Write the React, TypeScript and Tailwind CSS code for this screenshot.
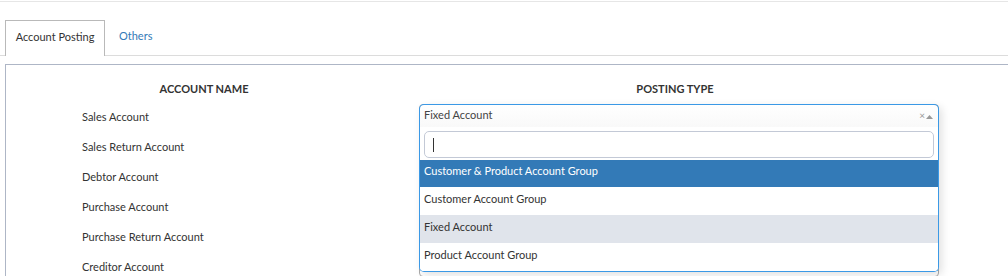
import React from 'react';

// Account rows shown on the left, each with a posting type select on the right
const accounts = [
    'Sales Account',
    'Sales Return Account',
    'Debtor Account',
    'Purchase Account',
    'Purchase Return Account',
    'Creditor Account',
];

const options = [
    'Customer & Product Account Group',
    'Customer Account Group',
    'Fixed Account',
    'Product Account Group',
];

const font = { fontFamily: 'Lato, "Open Sans", sans-serif' };

// Open select2-style dropdown, drawn over the rows below it
const OpenSelect: React.FC = () => (
    <div className="absolute left-0 top-0 z-10 w-[520px] shadow-[3px_3px_8px_rgba(0,0,0,0.12)] rounded-[5px]">
        <div className="flex h-[23px] items-center justify-between border border-b-0 border-[#3b99e6] rounded-t-[5px] bg-gradient-to-b from-white to-[#f9f9f9] pb-[2px] pl-[4px] pr-[5px]">
            <span className="text-[11px] text-[#444]">Fixed Account</span>
            <span className="flex items-center gap-[1px] text-[#999]">
                <span className="text-[10px] leading-none">×</span>
                <svg width="7" height="5" viewBox="0 0 7 5" className="mt-[2px]"><path d="M0 5 L3.5 1 L7 5 Z" fill="#999" /></svg>
            </span>
        </div>
        <div className="border border-t-0 border-[#3b99e6] rounded-b-[5px] bg-white overflow-hidden">
            <div className="px-[4px] pt-[4px] pb-[2px]">
                <div className="flex h-[27px] items-center border border-[#c3c9d6] rounded-[5px] pl-[8px]">
                    <span className="h-[14px] w-px bg-[#333]" />
                </div>
            </div>
            {options.map((o, i) => (
                <div
                    key={o}
                    className={
                        'flex items-center pl-[4px] pb-[4px] text-[11px] ' +
                        (i === 0 ? 'h-[27px] bg-[#337ab7] text-white' : i === 2 ? 'h-[28px] bg-[#e0e4eb] text-[#333]' : 'h-[28px] bg-white text-[#333]')
                    }
                >
                    {o}
                </div>
            ))}
        </div>
    </div>
);

const App: React.FC = () => {
    return (
        <div className="w-[1008px] h-[276px] overflow-hidden bg-white" style={font}>
            <div className="mt-px border-t border-[#e6e6e6]" />

            {/* Tabs */}
            <div className="mt-[18px] flex border-b border-[#dcdcdc] pl-[5px]">
                <div className="-mb-px flex h-[36px] w-[100px] items-center justify-center border border-b-0 border-[#b9b9b9] bg-white pb-[3px] text-[11px] text-[#333]">
                    Account Posting
                </div>
                <div className="flex h-[35px] items-center px-[14px] pb-[3px] text-[11px] text-[#337ab7]">Others</div>
            </div>

            {/* Panel */}
            <div className="ml-[5px] mt-[8px] border-l border-t border-[#aeb6c6]">
                <div className="flex h-[39px] items-center text-[11px] font-bold text-[#333]">
                    <div className="w-[396px] pt-[9px] text-center">ACCOUNT NAME</div>
                    <div className="w-[546px] pt-[9px] text-center">POSTING TYPE</div>
                </div>
                {accounts.map((a, i) => (
                    <div key={a} className="flex h-[30px]">
                        <div className="w-[396px] pl-[76px] pt-[5px] text-[11px] leading-[16px] text-[#333]">{a}</div>
                        <div className="relative ml-[17px] w-[520px]">
                            <div className="h-[23px] border border-[#aaa] rounded-[4px] bg-white" />
                            {i === 0 && <OpenSelect />}
                        </div>
                    </div>
                ))}
            </div>
        </div>
    );
};

export default App;
